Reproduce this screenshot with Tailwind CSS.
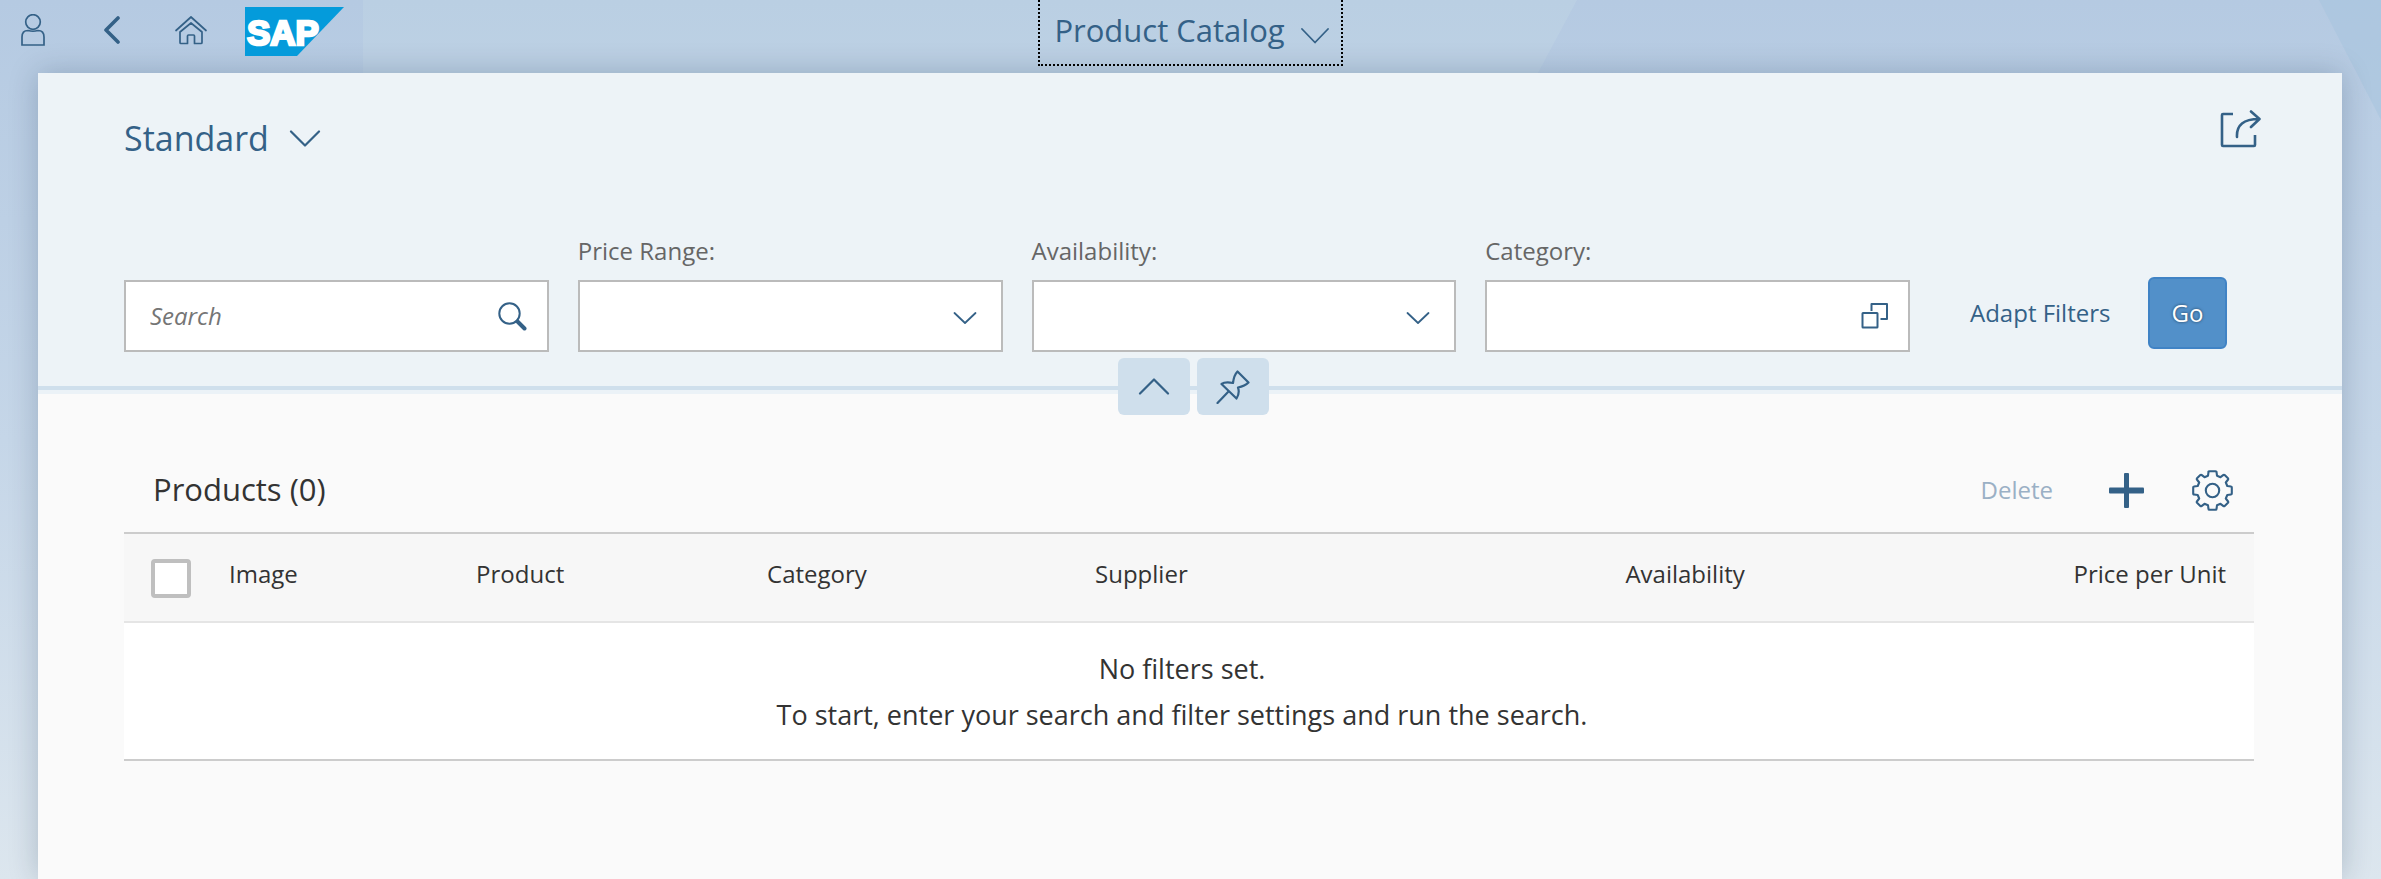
<!DOCTYPE html>
<html lang="en">
<head>
<meta charset="utf-8">
<meta name="viewport" content="width=device-width, initial-scale=1">
<title>Product Catalog</title>
<script src="https://cdn.jsdelivr.net/npm/@tailwindcss/browser@4"></script>
</head>
<body class="relative flex min-h-screen flex-col overflow-x-hidden bg-linear-to-b from-[#b5cae2] via-[#c5d6e8] to-[#dce6ee] font-['Open_Sans',sans-serif] text-2xl text-[#333]">

<!-- Faceted background -->
<svg class="absolute inset-0 h-full w-full" viewBox="0 0 2381 879" preserveAspectRatio="none" aria-hidden="true">
  <path d="M363 0H1577L1538 73H363Z" fill="#c3d8e6" fill-opacity=".4"/>
  <path d="M2319 0H2381V120Z" fill="#a5c3de" fill-opacity=".5"/>
</svg>

<header class="relative z-10 flex h-[73px] items-start justify-between px-5 text-[#346187]">
  <div class="flex h-[60px] flex-1 items-center">
    <button class="mr-[57px] flex" aria-label="User">
      <svg class="h-8 w-[26px]" viewBox="0 0 26 32" fill="none" stroke="currentColor" stroke-width="1.700"><circle cx="13" cy="8" r="7.300"/><path d="M2 31V23q0-6.500 6-6.500q5 1.500 10 0q6 0 6 6.500V31Z"/></svg>
    </button>
    <button class="mr-[53px] flex" aria-label="Back">
      <svg class="h-7 w-[18px]" viewBox="0 0 18 28" fill="none" stroke="currentColor" stroke-width="3.600" stroke-linecap="round" stroke-linejoin="round"><path d="M15 2L3 14L15 26"/></svg>
    </button>
    <button class="mr-[37px] flex" aria-label="Home">
      <svg class="h-[30px] w-[34px]" viewBox="0 0 34 30" fill="none" stroke="currentColor" stroke-width="1.700" stroke-linejoin="round" stroke-linecap="round"><path d="M2 15.500L17 2L32 15.500"/><path d="M6 17L17 8L28 17V27.500Q28 28.500 27 28.500H20.500V21q0-1-1-1h-5q-1 0-1 1V28.500H7Q6 28.500 6 27.500Z"/></svg>
    </button>
    <a href="#" aria-label="SAP" class="mt-[3px] flex">
      <svg class="h-[49px] w-[99px]" viewBox="0 0 99 49"><path d="M0 0H99L52 49H0Z" fill="#049bdb"/><text x="2" y="38" font-family="Liberation Sans, sans-serif" font-weight="700" font-size="35" fill="#fff" stroke="#fff" stroke-width="2.500">SAP</text></svg>
    </a>
  </div>
  <button class="flex h-[66px] items-center gap-4 border-2 border-t-0 border-dotted border-black pr-3 pb-[2px] pl-[14px] text-[31px]">
    <span>Product Catalog</span>
    <svg class="mt-[10px] h-4 w-7" viewBox="0 0 28 16" fill="none" stroke="currentColor" stroke-width="1.800" stroke-linecap="round" stroke-linejoin="round"><path d="M1 1L14 14.500L27 1"/></svg>
  </button>
  <div class="flex-1"></div>
</header>

<main class="relative mr-[39px] ml-[38px] flex flex-1 flex-col bg-[#fafafa] shadow-[0_0_28px_rgba(0,30,60,0.22)]">
  <section class="relative border-b-4 border-[#cfdfec] bg-[#edf3f7] pr-[88px] pl-[86px] pb-[34px] shadow-[0_4px_0_#ebf2f7]">
    <div class="flex items-start justify-between pt-[37px]">
      <button class="flex items-center gap-5 pt-1 text-[34px] leading-[48px] text-[#346187]">
        <span>Standard</span>
        <svg class="h-[17px] w-8" viewBox="0 0 32 17" fill="none" stroke="currentColor" stroke-width="2.200" stroke-linecap="round" stroke-linejoin="round"><path d="M2 1.500L16 15.500L30 1.500"/></svg>
      </button>
      <button class="-mr-2 flex text-[#346187]" aria-label="Share">
        <svg class="h-10 w-[42px]" viewBox="0 0 42 40" fill="none" stroke="currentColor" stroke-width="2.600" stroke-linecap="round" stroke-linejoin="round"><path d="M13 4H3Q2 4 2 5V35Q2 36 3 36H34Q35 36 35 35V25" stroke-linecap="butt"/><path d="M17 27Q16 9 39 9M31 1.500L39.500 9L31 17"/></svg>
      </button>
    </div>

    <div class="flex items-end gap-[29px] pt-[73px]">
      <div class="min-w-0 flex-1">
        <div class="flex h-[72px] items-center border-2 border-[#bbb] bg-white pr-5 pl-6">
          <input type="search" aria-label="Search" placeholder="Search" class="min-w-0 flex-1 outline-none placeholder:text-[#757575] placeholder:italic">
          <button class="flex text-[#346187]" aria-label="Run search">
            <svg class="h-[29px] w-[29px]" viewBox="0 0 29 29" fill="none" stroke="currentColor" stroke-linecap="round"><circle cx="11.500" cy="11.500" r="10.200" stroke-width="2"/><path d="M19.500 19.500L26.500 26.500" stroke-width="4"/></svg>
          </button>
        </div>
      </div>
      <div class="flex min-w-0 flex-1 flex-col gap-[13px]">
        <label for="price" class="leading-8 text-[#666]">Price Range:</label>
        <div class="relative">
          <select id="price" class="block h-[72px] w-full appearance-none border-2 border-[#bbb] bg-white px-6 outline-none"><option></option></select>
          <svg class="pointer-events-none absolute top-8 right-[26px] h-3 w-6 text-[#346187]" viewBox="0 0 24 12" fill="none" stroke="currentColor" stroke-width="1.800" stroke-linecap="round" stroke-linejoin="round"><path d="M1.500 1L12 11L22.500 1"/></svg>
        </div>
      </div>
      <div class="flex min-w-0 flex-1 flex-col gap-[13px]">
        <label for="avail" class="leading-8 text-[#666]">Availability:</label>
        <div class="relative">
          <select id="avail" class="block h-[72px] w-full appearance-none border-2 border-[#bbb] bg-white px-6 outline-none"><option></option></select>
          <svg class="pointer-events-none absolute top-8 right-[26px] h-3 w-6 text-[#346187]" viewBox="0 0 24 12" fill="none" stroke="currentColor" stroke-width="1.800" stroke-linecap="round" stroke-linejoin="round"><path d="M1.500 1L12 11L22.500 1"/></svg>
        </div>
      </div>
      <div class="flex min-w-0 flex-1 flex-col gap-[13px]">
        <label for="cat" class="leading-8 text-[#666]">Category:</label>
        <div class="flex h-[72px] items-center border-2 border-[#bbb] bg-white pr-5 pl-6">
          <input id="cat" type="text" class="min-w-0 flex-1 outline-none">
          <button class="flex text-[#346187]" aria-label="Select category">
            <svg class="h-[26px] w-[27px]" viewBox="0 0 27 26" fill="none" stroke="currentColor" stroke-width="2" stroke-linejoin="round"><rect x="1.500" y="10" width="15" height="14.500" rx=".5"/><path d="M10.500 8V1H26V16H19.500"/></svg>
          </button>
        </div>
      </div>
      <div class="flex w-[315px] items-center justify-between pr-[27px] pb-[3px] pl-[31px]">
        <button class="whitespace-nowrap text-[#346187]">Adapt Filters</button>
        <button class="h-[72px] w-[79px] rounded-md border-2 border-[#4083c5] bg-[#5290c9] font-medium text-white [text-shadow:0_0_3px_rgba(0,0,0,0.6)]">Go</button>
      </div>
    </div>

    <!-- Header collapse and pin toggles, straddling the divider -->
    <div class="absolute -bottom-[29px] left-1/2 z-10 flex -translate-x-[72px] gap-[7px] text-[#346187]">
      <button class="flex h-[57px] w-[72px] items-center justify-center rounded-md bg-[#cfdfec]" aria-label="Collapse header">
        <svg class="h-[17px] w-8" viewBox="0 0 32 17" fill="none" stroke="currentColor" stroke-width="2.200" stroke-linecap="round" stroke-linejoin="round"><path d="M2 15.500L16 1.500L30 15.500"/></svg>
      </button>
      <button class="flex h-[57px] w-[72px] items-center justify-center rounded-md bg-[#cfdfec]" aria-label="Pin header">
        <svg class="h-[34px] w-[34px]" viewBox="0 0 34 34" fill="none" stroke="currentColor" stroke-width="2.200" stroke-linecap="round" stroke-linejoin="round"><path d="M21.500 1.500L32.500 12.500Q29 16 22 17.500Q24 23 20.500 28.500L5.500 14Q9 11.500 17 13Q18 5 21.500 1.500ZM12.500 21.500L1.500 33"/></svg>
      </button>
    </div>
  </section>

  <section class="pr-[88px] pl-[86px] pt-[62px]">
    <div class="flex h-20 items-center pr-[21px] pb-1 pl-[29px]">
      <h2 class="mr-auto text-[31px]">Products (0)</h2>
      <button disabled class="mr-14 text-[#9ab0c5]">Delete</button>
      <button class="mr-12 flex text-[#346187]" aria-label="Add product">
        <svg class="h-[35px] w-[35px]" viewBox="0 0 35 35" fill="currentColor"><rect x="15" width="5" height="35" rx="1"/><rect y="14.500" width="35" height="6" rx="1"/></svg>
      </button>
      <button class="flex text-[#346187]" aria-label="Settings">
        <svg class="h-[41px] w-[41px]" viewBox="0 0 41 41" fill="none" stroke="currentColor" stroke-width="2.100" stroke-linejoin="round"><circle cx="20.500" cy="20.500" r="6.700"/><path d="M16.500 2Q16.500 1.200 17.500 1.200H23.500Q24.500 1.200 24.500 2L25 5.700L28.500 7.200L31.500 4.900Q32.100 4.500 32.700 5L36 8.300Q36.500 8.900 36.100 9.500L33.800 12.500L35.300 16L39 16.500Q39.800 16.500 39.800 17.500V23.500Q39.800 24.500 39 24.500L35.300 25L33.800 28.500L36.100 31.500Q36.500 32.100 36 32.700L32.700 36Q32.100 36.500 31.500 36.100L28.500 33.800L25 35.300L24.500 39Q24.500 39.800 23.500 39.800H17.500Q16.500 39.800 16.500 39L16 35.300L12.500 33.800L9.500 36.100Q8.900 36.500 8.300 36L5 32.700Q4.500 32.100 4.900 31.500L7.200 28.500L5.700 25L2 24.500Q1.200 24.500 1.200 23.500V17.500Q1.200 16.500 2 16.500L5.700 16L7.200 12.500L4.900 9.500Q4.500 8.900 5 8.300L8.300 5Q8.900 4.500 9.500 4.900L12.500 7.200L16 5.700Z"/></svg>
      </button>
    </div>
    <table class="w-full table-fixed border-separate border-spacing-0 border-y-2 border-[#ccc] text-left">
      <colgroup>
        <col class="w-[105px]"><col class="w-[11.6%]"><col class="w-[13.66%]"><col class="w-[15.4%]"><col class="w-[24.9%]"><col class="w-[12%]"><col>
      </colgroup>
      <thead class="bg-[#f7f7f7]">
        <tr class="h-[89px] align-top *:border-b-2 *:border-[#e5e5e5] *:pt-6 *:font-normal *:leading-8">
          <th class="pl-[27px]"><input type="checkbox" aria-label="Select all" class="mt-px block h-[39px] w-10 appearance-none rounded-sm border-4 border-[#bfbfbf] bg-white"></th>
          <th>Image</th>
          <th>Product</th>
          <th>Category</th>
          <th>Supplier</th>
          <th>Availability</th>
          <th class="pr-7 text-right">Price per Unit</th>
        </tr>
      </thead>
      <tbody>
        <tr><td colspan="7" class="bg-white pt-[23px] pr-[14px] pb-[21px] text-center text-[27px] leading-[46px]">No filters set.<br>To start, enter your search and filter settings and run the search.</td></tr>
      </tbody>
    </table>
  </section>
</main>
</body>
</html>
